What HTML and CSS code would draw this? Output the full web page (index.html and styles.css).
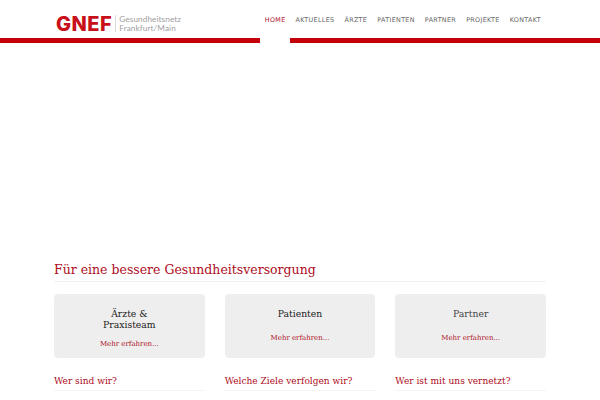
FILE: index.html
```html
<!DOCTYPE html>
<html lang="de">
<head>
<meta charset="utf-8">
<title>GNEF</title>
<link rel="stylesheet" href="styles.css">
</head>
<body>
<header class="header">
  <div class="top">
    <a class="logo" href="#">
      <span class="logo-mark">GNEF</span>
      <span class="logo-sub">Gesundheitsnetz<br>Frankfurt/Main</span>
    </a>
    <nav class="nav">
      <a class="active" href="#">HOME</a>
      <a href="#">AKTUELLES</a>
      <a href="#">ÄRZTE</a>
      <a href="#">PATIENTEN</a>
      <a href="#">PARTNER</a>
      <a href="#">PROJEKTE</a>
      <a href="#">KONTAKT</a>
    </nav>
  </div>
  <div class="rule"><i></i><b></b></div>
</header>
<main class="main">
  <h1 class="title">Für eine bessere Gesundheitsversorgung</h1>
  <section class="cards">
    <div class="card"><h2>Ärzte &amp;<br>Praxisteam</h2><a href="#">Mehr erfahren...</a></div>
    <div class="card single"><h2>Patienten</h2><a href="#">Mehr erfahren...</a></div>
    <div class="card single muted"><h2>Partner</h2><a href="#">Mehr erfahren...</a></div>
  </section>
  <section class="cols">
    <h3>Wer sind wir?</h3>
    <h3>Welche Ziele verfolgen wir?</h3>
    <h3>Wer ist mit uns vernetzt?</h3>
  </section>
</main>
</body>
</html>
```
FILE: styles.css
```css
* { box-sizing: border-box; }
html, body { margin: 0; height: 400px; overflow: hidden; background: #fff; }
body { font-family: "DejaVu Serif", serif; }
a { text-decoration: none; }

.top {
  height: 38px;
  padding: 0 59px 0 56px;
  display: flex;
  justify-content: space-between;
  align-items: center;
}
.logo { display: flex; align-items: center; gap: 3px; margin-top: 9px; }
.logo-mark {
  font: 800 20px/1 "Inter", "Liberation Sans", sans-serif;
  color: #c8101a;
  letter-spacing: 0.5px;
}
.logo-sub {
  border-left: 1px solid #ddd;
  padding-left: 3px;
  font: 400 8.2px/8.6px "Lato", "Liberation Sans", sans-serif;
  color: #a0a0a0;
  letter-spacing: 0.1px;
}
.nav { display: flex; gap: 10px; padding-top: 2px; }
.nav a {
  font: 6.4px/1 "DejaVu Sans", sans-serif;
  letter-spacing: 0.33px;
  color: #666;
}
.nav a.active { color: #b01030; }

.rule { display: flex; justify-content: space-between; height: 5px; }
.rule i { width: 260px; background: #c40008; }
.rule b { width: 310px; background: #c40008; }

.main { padding: 0 54px; margin-top: 217px; }
.title {
  margin: 0;
  padding-bottom: 1px;
  border-bottom: 1px solid #f2f2f2;
  font-size: 12.5px;
  line-height: 20px;
  font-weight: 400;
  color: #ad0c1c;
}
.cards {
  margin-top: 12px;
  display: grid;
  grid-template-columns: repeat(3, 1fr);
  gap: 20px;
}
.card {
  height: 64px;
  background: #eee;
  border-radius: 4px;
  padding-top: 13.5px;
  text-align: center;
}
.card h2 {
  margin: 0 0 9px;
  font-size: 9.25px;
  line-height: 11px;
  font-weight: 400;
  color: #222;
}
.card.single h2 { margin-bottom: 14px; }
.card.muted h2 { color: #444; }
.card a { display: block; font-size: 7px; line-height: 10px; color: #ad1125; }
.cols {
  margin-top: 15.5px;
  display: grid;
  grid-template-columns: repeat(3, 1fr);
  gap: 20px;
}
.cols h3 {
  margin: 0;
  padding-bottom: 1.5px;
  border-bottom: 1px solid #f4f4f4;
  font-size: 9.05px;
  line-height: 15px;
  font-weight: 400;
  color: #ad0c1c;
}
```
